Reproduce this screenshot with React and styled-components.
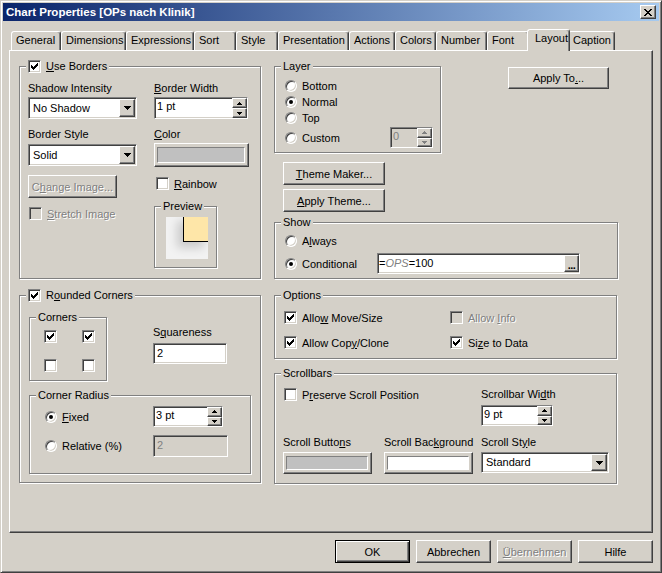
import React from "react";
import styled, { createGlobalStyle, css } from "styled-components";

const face = "#d4d0c8";

const GlobalStyle = createGlobalStyle`
  * { box-sizing: border-box; }
  html, body { margin: 0; padding: 0; background: ${face}; }
  body {
    font-family: "Liberation Sans", Arial, sans-serif;
    font-size: 11px;
    color: #000;
  }
`;

const raised = css`
  border: 1px solid;
  border-color: #fff #404040 #404040 #fff;
  box-shadow: inset -1px -1px 0 #808080;
  background: ${face};
`;

const sunken = css`
  border: 1px solid;
  border-color: #808080 #fff #fff #808080;
  box-shadow: inset 1px 1px 0 #404040, inset -1px -1px 0 ${face};
`;

const disabledText = css`
  color: #808080;
  text-shadow: 1px 1px 0 #fff;
`;

const Window = styled.div`
  width: 662px;
  height: 573px;
  background: ${face};
  border: 1px solid;
  border-color: ${face} #404040 #404040 ${face};
  box-shadow: inset 1px 1px 0 #fff, inset -1px -1px 0 #808080;
  padding: 2px;
  display: flex;
  flex-direction: column;
`;

const TitleBar = styled.div`
  flex: none;
  height: 18px;
  display: flex;
  align-items: center;
  justify-content: space-between;
  padding: 0 3px 0 3px;
  background: linear-gradient(to right, #0a246a, #a6caf0);
  color: #fff;
  font-weight: bold;
  font-size: 11.5px;
`;

const CloseButton = styled.button`
  ${raised}
  width: 16px;
  height: 14px;
  padding: 0;
  display: flex;
  align-items: center;
  justify-content: center;
`;

const TabBar = styled.div`
  flex: none;
  height: 21px;
  margin-top: 8px;
  padding-left: 8px;
  display: flex;
  align-items: flex-end;
`;

const Tab = styled.div`
  position: relative;
  flex: none;
  width: ${(p) => p.$w}px;
  height: 19px;
  padding: 2px 0 0 4px;
  border: 1px solid;
  border-bottom: none;
  border-color: #fff #404040 transparent #fff;
  border-radius: 3px 3px 0 0;
  box-shadow: inset -1px 0 0 #808080;
  background: ${face};
  line-height: 13px;
  white-space: nowrap;
  ${(p) =>
    p.$active &&
    css`
      height: 22px;
      margin: 0 -2px -1px;
      padding-left: 7px;
      z-index: 2;
    `}
`;

const Panel = styled.div`
  flex: none;
  margin-left: 6px;
  width: 644px;
  height: 483px;
  border: 1px solid;
  border-color: #fff #404040 #404040 #fff;
  box-shadow: inset -1px -1px 0 #808080;
  padding: 9px 0 0 9px;
  display: flex;
  gap: 13px;
`;

const Column = styled.div`
  flex: none;
  width: ${(p) => p.$w}px;
  display: flex;
  flex-direction: column;
  align-items: flex-start;
`;

const Group = styled.fieldset`
  flex: none;
  margin: ${(p) => p.$mt || 0}px 0 0 0;
  padding: 0;
  min-width: 0;
  width: ${(p) => p.$w}px;
  height: ${(p) => p.$h}px;
  border: 1px solid #808080;
  box-shadow: 1px 1px 0 #fff, inset 1px 1px 0 #fff;
`;

const Legend = styled.legend`
  margin-left: 6px;
  padding: 0 2px;
  height: 13px;
  line-height: 13px;
  display: flex;
  align-items: center;
  background: ${face};
  white-space: nowrap;
`;

const U = styled.span`
  text-decoration: underline;
  text-underline-offset: 1px;
`;

const Field = styled.div`
  display: flex;
  flex-direction: column;
  align-items: flex-start;
  gap: ${(p) => (p.$gap === undefined ? 2 : p.$gap)}px;
  margin-top: ${(p) => p.$mt || 0}px;
  margin-left: ${(p) => p.$ml || 0}px;
`;

const Label = styled.div`
  height: 13px;
  line-height: 13px;
  white-space: nowrap;
`;

const Button = styled.button`
  ${raised}
  flex: none;
  width: ${(p) => p.$w}px;
  height: ${(p) => p.$h}px;
  margin: ${(p) => p.$mt || 0}px ${(p) => p.$mr || 0}px 0 ${(p) => p.$ml || 0}px;
  padding: 0;
  font: inherit;
  color: #000;
  display: flex;
  align-items: center;
  justify-content: center;
  white-space: nowrap;
  ${(p) =>
    p.$default &&
    css`
      border-color: #000;
      box-shadow: inset 1px 1px 0 #fff, inset -1px -1px 0 #404040,
        inset -2px -2px 0 #808080;
    `}
  ${(p) => p.$disabled && disabledText}
`;

const SwatchButton = styled.button`
  ${raised}
  flex: none;
  width: ${(p) => p.$w}px;
  height: ${(p) => p.$h}px;
  padding: 3px 3px 3px 2px;
  display: flex;
`;

const Swatch = styled.div`
  flex: 1;
  background: ${(p) => p.$color};
  border: 1px solid;
  border-color: #808080 #fff #fff #808080;
`;

const ComboFrame = styled.div`
  ${sunken}
  flex: none;
  width: ${(p) => p.$w}px;
  height: ${(p) => p.$h}px;
  background: #fff;
  padding: 1px 1px 1px 4px;
  display: flex;
  align-items: center;
`;

const FieldText = styled.div`
  flex: 1;
  line-height: 13px;
  white-space: nowrap;
  color: ${(p) => (p.$disabled ? "#808080" : "#000")};
`;

const DropButton = styled.div`
  ${raised}
  flex: none;
  width: 16px;
  align-self: stretch;
  display: flex;
  align-items: center;
  justify-content: center;
`;

const SpinFrame = styled.div`
  ${sunken}
  flex: none;
  width: ${(p) => p.$w}px;
  height: ${(p) => p.$h}px;
  background: ${(p) => (p.$disabled ? face : "#fff")};
  display: flex;
`;

const SpinText = styled(FieldText)`
  padding: 2px 0 0 2px;
`;

const SpinButtons = styled.div`
  flex: none;
  width: 15px;
  display: flex;
  flex-direction: column;
`;

const SpinButton = styled.div`
  ${raised}
  flex: 1;
  display: flex;
  align-items: center;
  justify-content: center;
`;

const Edit = styled.div`
  ${sunken}
  flex: none;
  width: ${(p) => p.$w}px;
  height: ${(p) => p.$h}px;
  background: ${(p) => (p.$disabled ? face : "#fff")};
  color: ${(p) => (p.$disabled ? "#808080" : "#000")};
  padding: 3px 0 0 3px;
  line-height: 13px;
`;

const ExprEdit = styled.div`
  ${sunken}
  flex: none;
  width: ${(p) => p.$w}px;
  height: ${(p) => p.$h}px;
  background: #fff;
  display: flex;
  align-items: center;
  padding: 1px 0 1px 1px;
`;

const Var = styled.span`
  font-style: italic;
  color: #808080;
`;

const DotsButton = styled.div`
  ${raised}
  flex: none;
  width: 15px;
  align-self: stretch;
  display: flex;
  align-items: flex-end;
  justify-content: center;
  font-weight: bold;
  line-height: 12px;
  letter-spacing: -0.5px;
`;

const Opt = styled.div`
  flex: none;
  display: flex;
  align-items: center;
  gap: 5px;
  height: ${(p) => p.$h || 13}px;
  width: ${(p) => (p.$w ? `${p.$w}px` : "auto")};
  margin-top: ${(p) => p.$mt || 0}px;
  margin-left: ${(p) => p.$ml || 0}px;
  white-space: nowrap;
  grid-column: ${(p) => p.$span || "auto"};
  ${(p) => p.$disabled && disabledText}
`;

const CheckBox = styled.span`
  ${sunken}
  flex: none;
  width: 13px;
  height: 13px;
  background: ${(p) => (p.$disabled ? face : "#fff")};
  display: flex;
  align-items: center;
  justify-content: center;
`;

const RadioCircle = styled.span`
  flex: none;
  width: 12px;
  height: 12px;
  border-radius: 50%;
  border: 1px solid;
  border-color: #808080 #fff #fff #808080;
  box-shadow: inset 1px 1px 0 #404040, inset -1px -1px 0 ${face};
  background: #fff;
  display: flex;
  align-items: center;
  justify-content: center;
  &::after {
    content: "";
    display: ${(p) => (p.$on ? "block" : "none")};
    width: 4px;
    height: 4px;
    border-radius: 50%;
    background: #000;
  }
`;

const Row = styled.div`
  flex: none;
  display: flex;
  align-items: center;
  justify-content: ${(p) => p.$justify || "flex-start"};
  height: ${(p) => p.$h}px;
  margin-top: ${(p) => p.$mt || 0}px;
`;

const TopRow = styled.div`
  width: 100%;
  display: flex;
  justify-content: space-between;
  align-items: flex-start;
`;

/* group bodies */

const BordersBody = styled.div`
  display: grid;
  grid-template-columns: 126px auto;
  grid-template-rows: 46px 47px 25px auto;
  align-items: start;
  justify-items: start;
  padding: 9px 0 0 8px;
`;

const PreviewBody = styled.div`
  padding: 4px 0 0 11px;
`;

const PreviewArt = styled.div`
  width: 42px;
  height: 42px;
  overflow: hidden;
  background: #f2f2f2;
  display: flex;
  justify-content: flex-end;
  align-items: flex-start;
`;

const PreviewTile = styled.div`
  width: 25px;
  height: 25px;
  background: #fee6a8;
  border-left: 1px solid #000;
  border-bottom: 1px solid #000;
  box-shadow: -5px 5px 10px 1px rgba(0, 0, 0, 0.16);
`;

const RoundedBody = styled.div`
  display: flex;
  flex-direction: column;
  align-items: flex-start;
  gap: 8px;
  padding: 9px 0 0 9px;
`;

const CornersTop = styled.div`
  display: flex;
  align-items: flex-start;
`;

const CornersGrid = styled.div`
  display: grid;
  grid-template-columns: 13px 13px;
  column-gap: 25px;
  row-gap: 16px;
  padding: 6px 0 0 14px;
`;

const RadioList = styled.div`
  display: flex;
  flex-direction: column;
  gap: ${(p) => p.$gap}px;
  padding: ${(p) => p.$pad};
`;

const OptionsGrid = styled.div`
  display: grid;
  grid-template-columns: 166px auto;
  row-gap: 12px;
  padding: 9px 0 0 9px;
`;

const ScrollGrid = styled.div`
  display: grid;
  grid-template-columns: 101px 97px auto;
  row-gap: 10px;
  align-items: start;
  padding: 8px 0 0 8px;
`;

const Footer = styled.div`
  flex: none;
  display: flex;
  justify-content: flex-end;
  gap: 6px;
  margin-top: 7px;
  padding-right: 6px;
`;

/* drawings */

const CloseGlyph = () => (
  <svg width="8" height="7" viewBox="0 0 8 7" shapeRendering="crispEdges">
    <path
      fill="#000"
      d="M0 0h2v1H0z M6 0h2v1H6z M1 1h2v1H1z M5 1h2v1H5z M2 2h4v1H2z M3 3h2v1H3z M2 4h4v1H2z M1 5h2v1H1z M5 5h2v1H5z M0 6h2v1H0z M6 6h2v1H6z"
    />
  </svg>
);

const CheckMark = ({ color }) => (
  <svg width="7" height="7" viewBox="0 0 7 7" shapeRendering="crispEdges">
    <path
      fill={color}
      d="M0 2h1v3H0z M1 3h1v3H1z M2 4h1v3H2z M3 3h1v3H3z M4 2h1v3H4z M5 1h1v3H5z M6 0h1v3H6z"
    />
  </svg>
);

const DownArrow = () => (
  <svg width="7" height="4" viewBox="0 0 7 4" shapeRendering="crispEdges">
    <path fill="#000" d="M0 0h7v1H0z M1 1h5v1H1z M2 2h3v1H2z M3 3h1v1H3z" />
  </svg>
);

const SmallArrow = ({ up, color }) => (
  <svg width="5" height="3" viewBox="0 0 5 3" shapeRendering="crispEdges">
    <path
      fill={color}
      d={up ? "M2 0h1v1H2z M1 1h3v1H1z M0 2h5v1H0z" : "M0 0h5v1H0z M1 1h3v1H1z M2 2h1v1H2z"}
    />
  </svg>
);

/* controls */

function Check({ checked, disabled, children, ...rest }) {
  return (
    <Opt $disabled={disabled} {...rest}>
      <CheckBox $disabled={disabled}>
        {checked && <CheckMark color={disabled ? "#808080" : "#000"} />}
      </CheckBox>
      {children && <span>{children}</span>}
    </Opt>
  );
}

function Radio({ on, children, ...rest }) {
  return (
    <Opt {...rest}>
      <RadioCircle $on={on} />
      <span>{children}</span>
    </Opt>
  );
}

function Combo({ w, h = 22, children }) {
  return (
    <ComboFrame $w={w} $h={h}>
      <FieldText>{children}</FieldText>
      <DropButton>
        <DownArrow />
      </DropButton>
    </ComboFrame>
  );
}

function Spin({ w, h = 21, disabled, children }) {
  const c = disabled ? "#808080" : "#000";
  return (
    <SpinFrame $w={w} $h={h} $disabled={disabled}>
      <SpinText $disabled={disabled}>{children}</SpinText>
      <SpinButtons>
        <SpinButton>
          <SmallArrow up color={c} />
        </SpinButton>
        <SpinButton>
          <SmallArrow color={c} />
        </SpinButton>
      </SpinButtons>
    </SpinFrame>
  );
}

const tabs = [
  ["General", 50],
  ["Dimensions", 65],
  ["Expressions", 68],
  ["Sort", 42],
  ["Style", 42],
  ["Presentation", 71],
  ["Actions", 46],
  ["Colors", 41],
  ["Number", 51],
  ["Font", 42],
  ["Layout", 43],
  ["Caption", 47],
];

export default function App() {
  return (
    <>
      <GlobalStyle />
      <Window>
        <TitleBar>
          <span>Chart Properties [OPs nach Klinik]</span>
          <CloseButton type="button" aria-label="Close">
            <CloseGlyph />
          </CloseButton>
        </TitleBar>

        <TabBar>
          {tabs.map(([name, w]) => (
            <Tab key={name} $w={w} $active={name === "Layout"}>
              {name}
            </Tab>
          ))}
        </TabBar>

        <Panel>
          <Column $w={242}>
            <Group $w={242} $h={219}>
              <Legend>
                <Check checked>
                  <U>U</U>se Borders
                </Check>
              </Legend>
              <BordersBody>
                <Field>
                  <Label>Shadow Intensity</Label>
                  <Combo w={109}>No Shadow</Combo>
                </Field>
                <Field>
                  <Label>
                    <U>B</U>order Width
                  </Label>
                  <Spin w={94} h={22}>
                    1 pt
                  </Spin>
                </Field>
                <Field $gap={3}>
                  <Label>Border Style</Label>
                  <Combo w={109}>Solid</Combo>
                </Field>
                <Field>
                  <Label>
                    <U>C</U>olor
                  </Label>
                  <SwatchButton type="button" $w={95} $h={24}>
                    <Swatch $color="#c0c0c0" />
                  </SwatchButton>
                </Field>
                <Button type="button" $w={89} $h={23} $disabled>
                  C<U>h</U>ange Image...
                </Button>
                <Check $mt={2} $ml={2}>
                  <U>R</U>ainbow
                </Check>
                <Check disabled $mt={7} $ml={1}>
                  <U>S</U>tretch Image
                </Check>
                <Group $w={63} $h={68}>
                  <Legend>Preview</Legend>
                  <PreviewBody>
                    <PreviewArt>
                      <PreviewTile />
                    </PreviewArt>
                  </PreviewBody>
                </Group>
              </BordersBody>
            </Group>

            <Group $w={242} $h={194} $mt={10}>
              <Legend>
                <Check checked>
                  R<U>o</U>unded Corners
                </Check>
              </Legend>
              <RoundedBody>
                <CornersTop>
                  <Group $w={78} $h={70}>
                    <Legend>Corners</Legend>
                    <CornersGrid>
                      <Check checked />
                      <Check checked />
                      <Check />
                      <Check />
                    </CornersGrid>
                  </Group>
                  <Field $gap={4} $mt={15} $ml={46}>
                    <Label>
                      S<U>q</U>uareness
                    </Label>
                    <Edit $w={74} $h={21}>
                      2
                    </Edit>
                  </Field>
                </CornersTop>
                <Group $w={222} $h={85}>
                  <Legend>Corner Radius</Legend>
                  <RadioList $gap={8} $pad="4px 0 0 15px">
                    <Row $h={21}>
                      <Radio on $w={108}>
                        <U>F</U>ixed
                      </Radio>
                      <Spin w={70}>3 pt</Spin>
                    </Row>
                    <Row $h={22}>
                      <Radio $w={108}>Relative (%)</Radio>
                      <Edit $w={75} $h={22} $disabled>
                        2
                      </Edit>
                    </Row>
                  </RadioList>
                </Group>
              </RoundedBody>
            </Group>
          </Column>

          <Column $w={343}>
            <TopRow>
              <Group $w={167} $h={93}>
                <Legend>Layer</Legend>
                <RadioList $gap={2} $pad="6px 7px 0 10px">
                  <Radio $h={14}>Bottom</Radio>
                  <Radio on $h={14}>
                    Normal
                  </Radio>
                  <Radio $h={14}>Top</Radio>
                  <Row $h={21} $justify="space-between">
                    <Radio>Custom</Radio>
                    <Spin w={43} disabled>
                      0
                    </Spin>
                  </Row>
                </RadioList>
              </Group>
              <Button type="button" $w={101} $h={22} $mt={7} $mr={8}>
                Apply To<U>.</U>..
              </Button>
            </TopRow>

            <Button type="button" $w={102} $h={23} $mt={9} $ml={9}>
              <U>T</U>heme Maker...
            </Button>
            <Button type="button" $w={102} $h={23} $mt={4} $ml={9}>
              <U>A</U>pply Theme...
            </Button>

            <Group $w={344} $h={63} $mt={4}>
              <Legend>Show</Legend>
              <RadioList $gap={5} $pad="5px 0 0 10px">
                <Radio $h={14}>
                  A<U>l</U>ways
                </Radio>
                <Row $h={21}>
                  <Radio on $w={92}>
                    Conditional
                  </Radio>
                  <ExprEdit $w={203} $h={21}>
                    <FieldText>
                      =<Var>OPS</Var>=100
                    </FieldText>
                    <DotsButton>...</DotsButton>
                  </ExprEdit>
                </Row>
              </RadioList>
            </Group>

            <Group $w={343} $h={70} $mt={10}>
              <Legend>Options</Legend>
              <OptionsGrid>
                <Check checked>
                  Allo<U>w</U> Move/Size
                </Check>
                <Check disabled>
                  Allow <U>I</U>nfo
                </Check>
                <Check checked>
                  Allow Cop<U>y</U>/Clone
                </Check>
                <Check checked>
                  Si<U>z</U>e to Data
                </Check>
              </OptionsGrid>
            </Group>

            <Group $w={343} $h={117} $mt={8}>
              <Legend>Scrollbars</Legend>
              <ScrollGrid>
                <Check $ml={1} $span="span 2">
                  P<U>r</U>eserve Scroll Position
                </Check>
                <Field $gap={4}>
                  <Label>
                    Scrollbar Wi<U>d</U>th
                  </Label>
                  <Spin w={72}>9 pt</Spin>
                </Field>
                <Field $gap={3}>
                  <Label>
                    Scroll Butto<U>n</U>s
                  </Label>
                  <SwatchButton type="button" $w={89} $h={22}>
                    <Swatch $color="#c0c0c0" />
                  </SwatchButton>
                </Field>
                <Field $gap={3}>
                  <Label>
                    Scroll Bac<U>k</U>ground
                  </Label>
                  <SwatchButton type="button" $w={89} $h={22}>
                    <Swatch $color="#fff" />
                  </SwatchButton>
                </Field>
                <Field $gap={3}>
                  <Label>
                    Scroll St<U>y</U>le
                  </Label>
                  <Combo w={128} h={21}>
                    Standard
                  </Combo>
                </Field>
              </ScrollGrid>
            </Group>
          </Column>
        </Panel>

        <Footer>
          <Button type="button" $w={75} $h={23} $default>
            OK
          </Button>
          <Button type="button" $w={75} $h={23}>
            Abbrechen
          </Button>
          <Button type="button" $w={75} $h={23} $disabled>
            <U>Ü</U>bernehmen
          </Button>
          <Button type="button" $w={75} $h={23}>
            Hilfe
          </Button>
        </Footer>
      </Window>
    </>
  );
}
